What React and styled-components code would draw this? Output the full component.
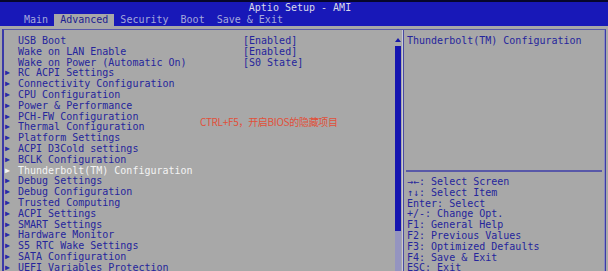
import React from "react";
import styled, { createGlobalStyle } from "styled-components";

const GlobalStyle = createGlobalStyle`
  html, body {
    margin: 0;
    padding: 0;
    background: #a8a8a8;
    overflow: hidden;
  }
  body {
    font-family: "DejaVu Sans Mono", "Liberation Mono", monospace;
    font-size: 10px;
  }
`;

const Screen = styled.div`
  position: relative;
  width: 608px;
  height: 271px;
  background: #a8a8a8;
  color: #25259c;
`;

const Header = styled.div`
  background: #1818b8;
  border-top: 2px solid #06062c;
  height: 24px;
  display: flex;
  flex-direction: column;
`;

const Title = styled.div`
  height: 11px;
  line-height: 11px;
  text-align: center;
  color: #d8d8e8;
  padding-right: 8px;
`;

const TabRow = styled.div`
  display: flex;
  padding-left: 18px;
  height: 12px;
  margin-top: 1px;
`;

const Tab = styled.div`
  white-space: pre;
  line-height: 12px;
  color: ${(p) => (p.$active ? "#1c1c90" : "#a4a8dc")};
  background: ${(p) => (p.$active ? "#a8a8a8" : "transparent")};
`;

const Frame = styled.div`
  margin: 3px 2px 0 2px;
  height: 243px;
  border-top: 1px solid #5a5aa8;
  border-left: 2px solid #3a3aa8;
  border-right: 1px solid #3a3aa8;
  display: grid;
  grid-template-columns: 389px 9px 2px 1fr;
`;

const LeftPanel = styled.div`
  padding-top: 6px;
`;

const Row = styled.div`
  display: flex;
  height: 10.8px;
  line-height: 10.8px;
  white-space: pre;
  color: ${(p) => (p.$selected ? "#f4f4f4" : "#25259c")};
`;

const Arrow = styled.span`
  width: 13px;
  padding-left: 1px;
  font-size: 8px;
  color: ${(p) => (p.$selected ? "#f4f4f4" : "#2a2aa8")};
`;

const Name = styled.span`
  width: 225px;
`;

const ScrollBar = styled.div`
  display: flex;
  flex-direction: column;
  align-items: center;
  padding-top: 8px;
`;

const UpArrow = styled.div`
  width: 0;
  height: 0;
  border-left: 3px solid transparent;
  border-right: 3px solid transparent;
  border-bottom: 4px solid #1818a8;
  margin-bottom: 4px;
`;

const Thumb = styled.div`
  width: 6px;
  height: 185px;
  background: #1414b0;
`;

const Track = styled.div`
  width: 6px;
  flex: 1;
  background: #9494c0;
`;

const Divider = styled.div`
  border-left: 1px solid #c8c8dc;
  border-right: 1px solid #4a4aa0;
`;

const RightPanel = styled.div`
  display: flex;
  flex-direction: column;
  padding: 6px 2px 0 3px;
  border-right: 1px solid #8a8ac0;
`;

const HelpTitle = styled.div`
  line-height: 10.8px;
  height: 134px;
  white-space: pre;
`;

const Separator = styled.div`
  height: 2px;
  background: #5858a8;
  margin-left: -1px;
  margin-bottom: 5px;
`;

const HelpLine = styled.div`
  line-height: 10.8px;
  height: 10.8px;
  white-space: pre;
`;

const Note = styled.div`
  position: absolute;
  left: 200px;
  top: 114px;
  font-family: "Noto Sans CJK SC", "Noto Sans", sans-serif;
  font-size: 10px;
  letter-spacing: -0.3px;
  color: #e0503a;
`;

const items = [
  { name: "USB Boot", value: "[Enabled]" },
  { name: "Wake on LAN Enable", value: "[Enabled]" },
  { name: "Wake on Power (Automatic On)", value: "[S0 State]" },
  { name: "RC ACPI Settings", sub: true },
  { name: "Connectivity Configuration", sub: true },
  { name: "CPU Configuration", sub: true },
  { name: "Power & Performance", sub: true },
  { name: "PCH-FW Configuration", sub: true },
  { name: "Thermal Configuration", sub: true },
  { name: "Platform Settings", sub: true },
  { name: "ACPI D3Cold settings", sub: true },
  { name: "BCLK Configuration", sub: true },
  { name: "Thunderbolt(TM) Configuration", sub: true, selected: true },
  { name: "Debug Settings", sub: true },
  { name: "Debug Configuration", sub: true },
  { name: "Trusted Computing", sub: true },
  { name: "ACPI Settings", sub: true },
  { name: "SMART Settings", sub: true },
  { name: "Hardware Monitor", sub: true },
  { name: "S5 RTC Wake Settings", sub: true },
  { name: "SATA Configuration", sub: true },
  { name: "UEFI Variables Protection", sub: true },
];

const help = [
  "→←: Select Screen",
  "↑↓: Select Item",
  "Enter: Select",
  "+/-: Change Opt.",
  "F1: General Help",
  "F2: Previous Values",
  "F3: Optimized Defaults",
  "F4: Save & Exit",
  "ESC: Exit",
];

const tabs = ["Main", "Advanced", "Security", "Boot", "Save & Exit"];

export default function App() {
  return (
    <Screen>
      <GlobalStyle />
      <Header>
        <Title>Aptio Setup - AMI</Title>
        <TabRow>
          {tabs.map((t) => (
            <Tab key={t} $active={t === "Advanced"}>{` ${t} `}</Tab>
          ))}
        </TabRow>
      </Header>
      <Frame>
        <LeftPanel>
          {items.map((it) => (
            <Row key={it.name} $selected={it.selected}>
              <Arrow $selected={it.selected}>{it.sub ? "▶" : ""}</Arrow>
              <Name>{it.name}</Name>
              {it.value && <span>{it.value}</span>}
            </Row>
          ))}
        </LeftPanel>
        <ScrollBar>
          <UpArrow />
          <Thumb />
          <Track />
        </ScrollBar>
        <Divider />
        <RightPanel>
          <HelpTitle>Thunderbolt(TM) Configuration</HelpTitle>
          <Separator />
          {help.map((h) => (
            <HelpLine key={h}>{h}</HelpLine>
          ))}
        </RightPanel>
      </Frame>
      <Note>CTRL+F5，开启BIOS的隐藏项目</Note>
    </Screen>
  );
}
